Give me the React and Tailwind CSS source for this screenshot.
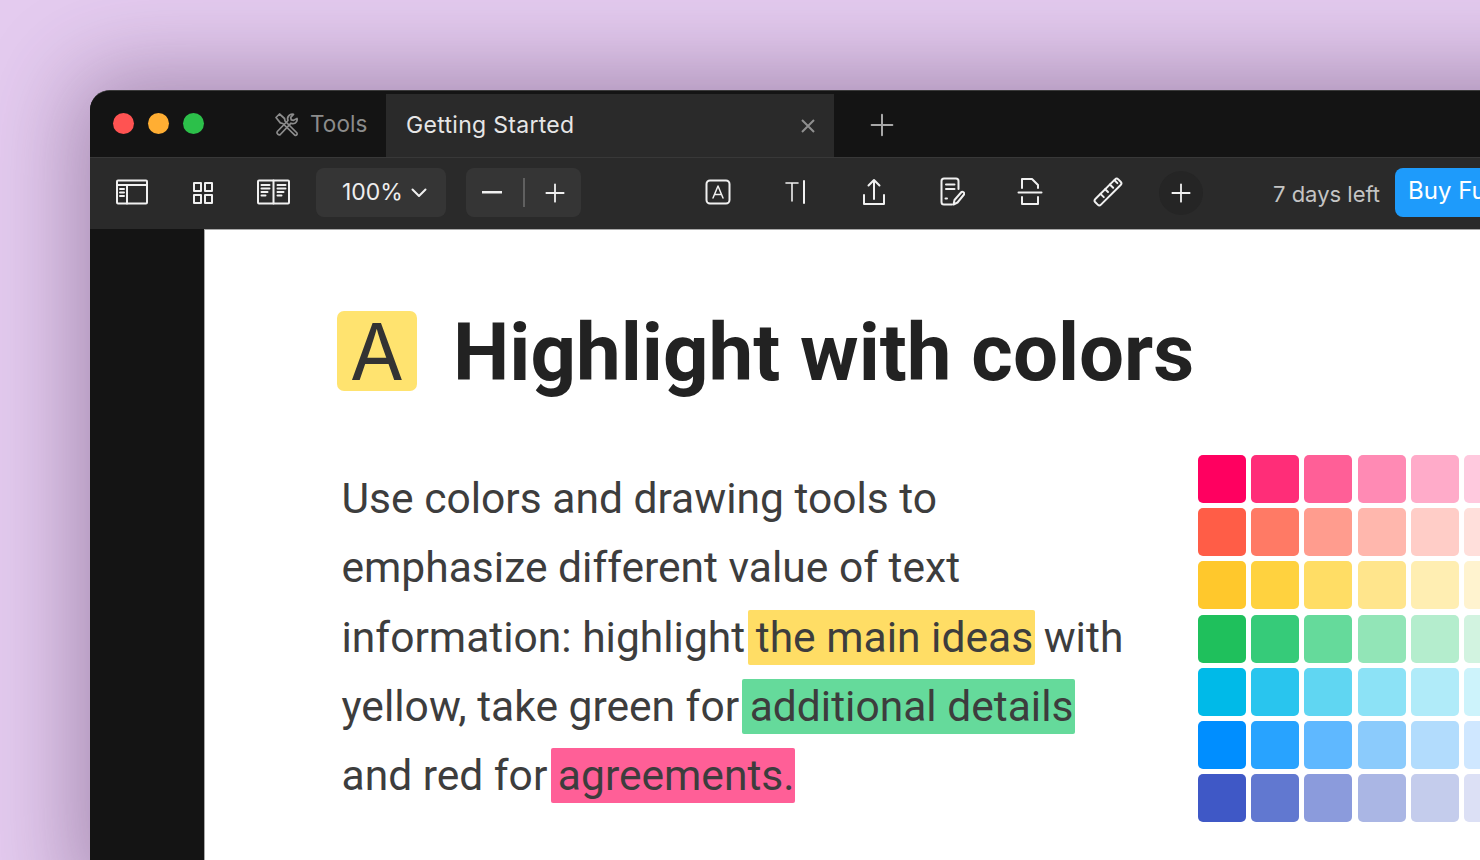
import React from "react";

const swatches = [
  ["#ff0060", "#ff2d78", "#ff5f97", "#ff8ab4", "#ffabc9", "#ffc9de"],
  ["#ff5d47", "#ff7a65", "#ff9c8e", "#ffb7ad", "#ffcdc7", "#ffdfdb"],
  ["#ffc82c", "#ffd23f", "#ffdd65", "#ffe58c", "#ffeeb2", "#fff3cf"],
  ["#1fc05c", "#36cb79", "#65da9b", "#92e5b7", "#b4edcd", "#d2f3e0"],
  ["#00bae8", "#29c5ee", "#60d6f2", "#8ce2f6", "#b0ebf9", "#cdf3fb"],
  ["#008eff", "#28a3ff", "#5fb8ff", "#8bcbfc", "#b2dcfd", "#cfe7ff"],
  ["#3f58c6", "#6178d0", "#8b9bdc", "#aab6e4", "#c4ccec", "#dce0f5"],
];

const S = ({ w, h, children, color = "#f0f0f0", sw = 2, vb }) => (
  <svg width={w} height={h} viewBox={vb || `0 0 ${w} ${h}`} fill="none" stroke={color} strokeWidth={sw} strokeLinecap="round" strokeLinejoin="round">
    {children}
  </svg>
);

const ToolsIcon = () => (
  <S w={26} h={26} color="#8c8c8c" sw={1.7}>
    <path d="M3 6.500 6.500 3l5 4.500.5 2.500 12 12c.6 1.600-.6 2.800-2.200 2.200L9.800 12.500l-2.500-.6z" />
    <path d="M24 7.500c.5 2-.3 3.500-1.800 4.500-1.300.8-2.900.8-4.200.2L7.300 23.500c-1.500 1.300-4.300-1.200-3-3L15 9.500c-.7-1.500-.4-3.400.9-4.800C17.200 3.300 19 2.900 20.500 3.400L17.700 6.300l.5 2.500 2.400.5z" />
  </S>
);

const SidebarIcon = () => (
  <S w={32} h={26}>
    <rect x="1" y="1.500" width="30" height="23" rx="1" />
    <path d="M1 6h30M11 6v18.500M4 10h4M4 13.500h4M4 17h4" />
  </S>
);

const GridIcon = () => (
  <S w={22} h={24}>
    <rect x="2" y="2" width="7" height="8" />
    <rect x="13" y="2" width="7" height="8" />
    <rect x="2" y="14" width="7" height="8" />
    <rect x="13" y="14" width="7" height="8" />
  </S>
);

const BookIcon = () => (
  <S w={33} h={26}>
    <rect x="1" y="1.500" width="31" height="23" rx="1" />
    <path d="M16.500 1.500v23M4.500 6h8M4.500 9.500h8M4.500 13h6M4.500 16.500h4M20.500 6h8M20.500 9.500h8M20.500 13h6M20.500 16.500h4" />
  </S>
);

const HighlightBoxIcon = () => (
  <S w={26} h={26}>
    <rect x="1.500" y="1.500" width="23" height="23" rx="3.500" />
    <path d="M8 19 13 7l5 12M9.500 15.500h7" strokeWidth={1.500} />
  </S>
);

const TextIcon = () => (
  <S w={24} h={26}>
    <path d="M2 4h12M8 4v18" strokeWidth={1.600} />
    <path d="M20 2v22" />
  </S>
);

const ShareIcon = () => (
  <S w={24} h={30}>
    <path d="M12 3v19M6.500 8.500 12 3l5.500 5.500M2 18v9h20v-9" />
  </S>
);

const NoteIcon = () => (
  <S w={26} h={30}>
    <path d="M13 27.500H5c-1.500 0-2.500-1-2.500-2.500V4c0-1.500 1-2.500 2.500-2.500h12c1.500 0 2.500 1 2.500 2.500v8" />
    <path d="M7 7.500h8.500M7 12h8.500M6.500 21.500h1.500" />
    <path d="M14.500 27.500l1-4.500 7-8c1-1 3.500 1 2.500 2.500l-6.500 8z" />
  </S>
);

const CropIcon = () => (
  <S w={26} h={30}>
    <path d="M5 11V2h10l6 6v3M5 20v7h16v-7M1.500 15.500h23" />
  </S>
);

const RulerIcon = () => (
  <S w={30} h={30} vb="0 0 32 32" sw={2.100}>
    <path d="M2.500 23.500 23.500 2.500c1-1 2.500-1 3.500 0l2.500 2.500c1 1 1 2.500 0 3.500L8.500 29.500c-1 1-2.500 1-3.500 0L2.500 27c-1-1-1-2.500 0-3.500z" />
    <path d="M8 18l3.500 3.500M13 13l3 3M18 8l3.500 3.500M23 3.500l3 3" />
  </S>
);

const Plus = ({ size = 22, color = "#f0f0f0", sw = 2 }) => (
  <svg width={size} height={size} viewBox="0 0 22 22" fill="none" stroke={color} strokeWidth={sw} strokeLinecap="round">
    <path d="M11 1.500v19M1.500 11h19" />
  </svg>
);

export default function App() {
  return (
    <div className="w-[1480px] h-[860px] overflow-hidden bg-[#e4cbef] pl-[90px] pt-[90px] font-['Inter',sans-serif]">
      <div className="w-[1500px] h-[800px] rounded-tl-[20px] overflow-hidden bg-[#141414] border-t border-[#3a3a3a] shadow-[0_0_90px_15px_rgba(70,40,80,0.4)] flex flex-col">
        {/* Title bar */}
        <div className="h-[66px] flex items-center bg-[#141414] pl-[23px] shrink-0">
          <div className="flex items-center gap-[14px] shrink-0 -mt-px">
            <div className="w-[21px] h-[21px] rounded-full bg-[#ff5352]" />
            <div className="w-[21px] h-[21px] rounded-full bg-[#ffae33]" />
            <div className="w-[21px] h-[21px] rounded-full bg-[#2cc04a]" />
          </div>
          <div className="ml-[69px] w-[113px] shrink-0 flex items-center">
            <ToolsIcon />
            <span className="ml-[11px] text-[22.500px] text-[#8c8c8c] tracking-[0.1px]">Tools</span>
          </div>
          <div className="w-[448px] h-[63px] shrink-0 self-end bg-[#2a2a2a] pl-[20px] pr-[18px] flex items-center justify-between">
            <span className="text-[23px] text-[#e6e6e6] tracking-[0.3px]">Getting Started</span>
            <svg width="16" height="16" viewBox="0 0 16 16" fill="none" stroke="#8f8f8f" strokeWidth="2">
              <path d="M2 2l12 12M14 2 2 14" />
            </svg>
          </div>
          <div className="ml-[36px] mt-[2px] shrink-0">
            <Plus size={24} color="#a8a8a8" sw={1.800} />
          </div>
        </div>

        {/* Toolbar */}
        <div className="h-[72px] shrink-0 bg-[#2a2a2a] border-t border-[#383838] flex items-center pl-[26px] pb-[2px]">
          <div className="shrink-0 -mt-px"><SidebarIcon /></div>
          <div className="ml-[44px] shrink-0"><GridIcon /></div>
          <div className="ml-[43px] shrink-0 -mt-px"><BookIcon /></div>
          <div className="ml-[26px] w-[130px] h-[49px] shrink-0 rounded-[8px] bg-[#353535] flex items-center pl-[26px] gap-[8px]">
            <span className="text-[23px] text-[#eeeeee] -mt-px">100%</span>
            <svg width="16" height="10" viewBox="0 0 16 10" fill="none" stroke="#f0f0f0" strokeWidth="2" strokeLinecap="round" strokeLinejoin="round">
              <path d="M1.500 1.500 8 8l6.500-6.500" />
            </svg>
          </div>
          <div className="ml-[20px] w-[115px] h-[49px] shrink-0 rounded-[8px] bg-[#353535] flex items-center justify-between px-[16px]">
            <svg width="20" height="3" viewBox="0 0 20 3"><rect width="20" height="2.500" fill="#f0f0f0" /></svg>
            <div className="w-[2px] h-[29px] bg-[#606060]" />
            <Plus size={20} />
          </div>
          <div className="ml-[98px] flex items-center shrink-0 -mt-[2px]">
            <div className="w-[78px] flex justify-center"><HighlightBoxIcon /></div>
            <div className="w-[78px] flex justify-center"><TextIcon /></div>
            <div className="w-[78px] flex justify-center"><ShareIcon /></div>
            <div className="w-[78px] flex justify-center"><NoteIcon /></div>
            <div className="w-[78px] flex justify-center"><CropIcon /></div>
            <div className="w-[78px] flex justify-center"><RulerIcon /></div>
          </div>
          <div className="ml-[12px] w-[44px] h-[44px] shrink-0 rounded-full bg-[#252525] flex items-center justify-center">
            <Plus size={20} />
          </div>
          <span className="ml-[70px] w-[106px] shrink-0 text-[22px] text-[#c4c4c4] whitespace-nowrap mt-[3px]">7 days left</span>
          <div className="ml-[16px] h-[49px] w-[200px] shrink-0 rounded-l-[8px] bg-[#1e9bfb] pl-[13px] pb-[3px] flex items-center text-[24px] text-white whitespace-nowrap">
            Buy Full Version
          </div>
        </div>

        {/* Body */}
        <div className="flex-1 flex min-h-0">
          <div className="w-[114px] shrink-0 bg-[#141414]" />
          <div className="flex-1 bg-white border-l border-t border-[#a8a8a8] pl-[132px] pt-[81px] font-['Roboto',sans-serif]">
            <div className="flex items-start">
              <div className="w-[80px] h-[80px] shrink-0 rounded-[7px] bg-[#ffe36f] pt-[2px] flex items-center justify-center text-[78px] leading-none text-[#333333] font-['Inter',sans-serif]">
                A
              </div>
              <h1 className="ml-[36px] mt-[2px] text-[79.800px] leading-[80px] font-bold text-[#222222] whitespace-nowrap">
                Highlight with colors
              </h1>
            </div>
            <div className="flex items-start mt-[62px]">
              <p className="w-[861px] shrink-0 pl-[4.500px] pt-[9px] text-[42.550px] leading-[69.3px] text-[#3d3d3d] whitespace-nowrap">
                Use colors and drawing tools to
                <br />
                emphasize different value of text
                <br />
                information: highlight <span className="bg-[#ffdd65] rounded-[2px] py-[3px] pl-2 -ml-2 pr-0.5 -mr-0.5">the main ideas</span> with
                <br />
                yellow, take green for <span className="bg-[#65da9b] rounded-[2px] py-[3px] pl-2 -ml-2 pr-0.5 -mr-0.5">additional details</span>
                <br />
                and red for <span className="bg-[#ff5f97] rounded-[2px] py-[3px] pl-[7px] -ml-[7px]">agreements.</span>
              </p>
              <div className="grid grid-cols-[repeat(6,48px)] gap-[5.200px] shrink-0">
                {swatches.flat().map((c, i) => (
                  <div key={i} className="w-[48px] h-[48px] rounded-[5px]" style={{ backgroundColor: c }} />
                ))}
              </div>
            </div>
          </div>
        </div>
      </div>
    </div>
  );
}
